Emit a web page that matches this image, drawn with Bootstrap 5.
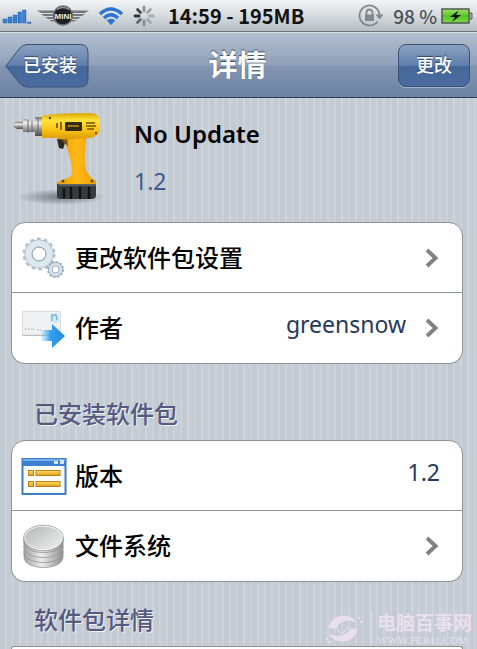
<!DOCTYPE html>
<html lang="zh-CN">
<head>
<meta charset="utf-8">
<meta name="viewport" content="width=device-width, initial-scale=1">
<title>详情</title>
<link href="https://cdn.jsdelivr.net/npm/bootstrap@5.3.0/dist/css/bootstrap.min.css" rel="stylesheet">
<style>
  body {
    font-family: "Noto Sans", "Noto Sans CJK SC", sans-serif;
    color: #000;
    background: #c5ccd4 repeating-linear-gradient(90deg, #c3cad2 0 5px, #cdd4da 5px 7px, #c5ccd4 7px 12px, #cbd2d8 12px 14px);
  }
  svg { display: block; flex: none; }
  .status-bar {
    height: 32px;
    padding: 0 4px 0 2px;
    font-size: 19px;
    background: linear-gradient(#f3f5f6, #d6dbdf 50%, #b5bdc4);
    border-bottom: 1px solid #6d7780;
  }
  .clock { font-family: "Noto Sans CJK SC", sans-serif; font-weight: 700; font-size: 20px; color: #111; line-height: 28px; margin-left: 12px; }
  .charge { font-family: "Noto Sans CJK SC", sans-serif; font-weight: 500; color: #4b4f53; line-height: 28px; }
  .title-bar {
    isolation: isolate;
    height: 66px;
    padding: 0 7px 0 5px;
    background: linear-gradient(#b2bfce, #8fa0b9 50%, #8496b2 51%, #6c81a3);
    border-top: 1px solid #dce2e9;
    border-bottom: 1px solid #303c4e;
  }
  .bar-side { flex: 1 1 0; }
  .title-bar h1 {
    font-size: 29px; line-height: 60px; font-weight: 700;
    color: #fff; text-shadow: 0 -1px 1px #3c4a60;
  }
  .bar-btn {
    height: 43px; padding: 0; border: 1px solid #3b5275; border-radius: 8px;
    font-size: 18px; line-height: 40px; font-weight: 500;
    color: #fff; text-shadow: 0 -1px 1px #30466b;
    background: linear-gradient(#8ba1c0, #5f7eac 50%, #446799 51%, #4a6ca0);
    box-shadow: 0 1px 0 #a3b3c9;
  }
  .bar-btn:hover { color: #fff; }
  .btn-change { width: 72px; }
  .btn-back { position: relative; width: 84px; border: 0; background: none; box-shadow: none; padding-left: 6px; }
  .btn-back svg { position: absolute; inset: 0; z-index: -1; }
  .package-head { padding: 8px 0 16px 8px; gap: 26px; }
  .package-head h2 { font-size: 24px; line-height: 32px; font-weight: 600; }
  .package-head p { font-size: 23px; line-height: 32px; color: #3d5b8f; margin-top: 15px; }
  .rows {
    margin: 0 14px 0 11px;
    --bs-list-group-border-color: #8e9296;
    --bs-list-group-border-radius: 14px;
    --bs-list-group-color: #000;
  }
  .rows .list-group-item { height: 71px; padding: 0 22px 0 9px; }
  .row-name { font-size: 24px; font-weight: 500; margin-left: 8px; line-height: 36px; }
  .row-value { font-size: 23px; line-height: 32px; color: #263a5c; margin-bottom: 8px; }
  .row-value + svg { margin-left: 18px; }
  .section-head { padding: 0 5px 0 34px; }
  .section-head h3 {
    font-size: 24px; line-height: 36px; font-weight: 500;
    color: #565a80; text-shadow: 1px 1px 0 #eef1f5;
  }
  .section-gap { padding-top: 32px; }
  .next-group { margin: 0 14px 0 11px; border: 1px solid #8e9296; border-bottom: 0; border-radius: 14px 14px 0 0; background: #fff; }
  .site-mark { color: #eadfec; gap: 8px; }
  .site-mark:hover { color: #eadfec; }
  .site-label { border-left: 1px solid #e2dae7; padding-left: 5px; }
  .site-name { font-size: 19px; line-height: 22px; font-weight: 700; }
  .site-url { font-family: "Liberation Serif", serif; font-size: 11px; line-height: 12px; }
</style>
</head>
<body>
<div class="d-flex flex-column min-vh-100 overflow-hidden">

  <div class="status-bar d-flex align-items-center">
    <svg width="30" height="18" viewBox="0 0 30 18" role="img" aria-label="信号">
      <g fill="#3a7fd0" stroke="#2767b3" stroke-width=".5"><path d="M1 12h4v4H1zM6 10h4v6H6zM11 8h4v8h-4zM16 5h3.500v11H16zM20.500 3h3.500v13h-3.500zM25.500 15h3.500v1.500h-3.500z"/></g>
    </svg>
    <svg class="ms-1" width="54" height="24" viewBox="0 0 54 24" role="img" aria-label="MINI">
      <g fill="#73797c"><path d="M1 6.500H19V9H5zM5 10h14v2H8zM9 13h10v2h-7zM13 16h7v1.500h-4zM53 6.500H35V9h14zM49 10H35v2h11zM45 13H35v2h7zM41 16h-7v1.500h4z"/></g>
      <circle cx="27" cy="11.500" r="9.500" fill="#1d2023" stroke="#6c7276" stroke-width="1.500"/>
      <path d="M21 5.500q6-4 12 0" stroke="#8d9498" stroke-width="1.500" fill="none"/>
      <text x="27" y="15" text-anchor="middle" font-family="Liberation Sans, sans-serif" font-size="8" font-weight="700" fill="#eee">MINI</text>
    </svg>
    <svg class="ms-2" width="26" height="20" viewBox="0 0 26 20" role="img" aria-label="Wi-Fi">
      <g fill="none" stroke="#2a75cf" stroke-width="3.400"><path d="M2 8Q13-2 24 8M6 12q7-6.500 14 0"/></g>
      <path d="M8.800 14.500q4.200-3.600 8.400 0L13 19z" fill="#2a75cf"/>
    </svg>
    <svg class="ms-2" width="24" height="24" viewBox="-12 -12 24 24" role="img" aria-label="加载中">
      <g stroke-width="2.800" stroke-linecap="round">
        <path d="M0-5v-4" stroke="#909599"/><path d="M3.500-3.500l3-3" stroke="#9da2a5"/><path d="M5 0h4" stroke="#aaafb2"/><path d="M3.500 3.500l3 3" stroke="#a0a5a8"/>
        <path d="M0 5v4" stroke="#858a8d"/><path d="M-3.500 3.500l-3 3" stroke="#64686b"/><path d="M-5 0h-4" stroke="#303336"/><path d="M-3.500-3.500l-3-3" stroke="#3f4346"/>
      </g>
    </svg>
    <span class="clock text-nowrap">14:59 - 195MB</span>
    <svg class="ms-auto" width="28" height="26" viewBox="0 0 28 26" role="img" aria-label="方向锁定">
      <g fill="none" stroke="#84898d" stroke-width="1.800"><path d="M20.500 18.500A10 10 0 1 1 22.500 12"/><path d="M9.500 12V9.500a3 3 0 0 1 6 0V12"/></g>
      <path d="M8 11.500h9v6.500H8zM18.500 11.500h8l-4 5z" fill="#84898d"/>
    </svg>
    <span class="charge ms-2 text-nowrap">98 %</span>
    <svg class="ms-1" width="32" height="18" viewBox="0 0 32 18" role="img" aria-label="正在充电">
      <defs><linearGradient id="cell" x2="0" y2="1"><stop stop-color="#a4e36c"/><stop offset=".5" stop-color="#55c322"/><stop offset="1" stop-color="#80d94b"/></linearGradient></defs>
      <rect x="1" y="2" width="27" height="14" fill="url(#cell)" stroke="#4f5a4f" stroke-width="1.500"/>
      <path d="M29 6h2v6h-2" fill="#9ba59b" stroke="#5b655b"/>
      <path d="M17.500 3.500L9 10h5l-3 5 9-7h-5z" fill="#111"/>
    </svg>
  </div>

  <header class="title-bar d-flex align-items-center">
    <div class="bar-side">
      <button type="button" class="btn bar-btn btn-back">
        <svg width="84" height="44" viewBox="0 0 84 44" aria-hidden="true">
          <defs><linearGradient id="back" x2="0" y2="1"><stop stop-color="#8ba1c0"/><stop offset=".5" stop-color="#5f7eac"/><stop offset=".51" stop-color="#446799"/><stop offset="1" stop-color="#4a6ca0"/></linearGradient></defs>
          <path d="M.8 22L14 5Q18 .5 22 .5h53q8 0 8 8V35q0 8-8 8H22q-4 0-8-4.500z" fill="url(#back)" stroke="#3b5275"/>
        </svg>已安装
      </button>
    </div>
    <h1 class="m-0">详情</h1>
    <div class="bar-side text-end">
      <button type="button" class="btn bar-btn btn-change">更改</button>
    </div>
  </header>

  <main class="d-flex flex-column flex-grow-1">
    <section class="package-head d-flex align-items-start">
      <svg width="100" height="100" viewBox="5 106 100 100" role="img" aria-label="电钻">
        <defs>
          <linearGradient id="body" x2="0" y2="1"><stop stop-color="#d9a800"/><stop offset=".25" stop-color="#ffe23a"/><stop offset=".6" stop-color="#f8c313"/><stop offset="1" stop-color="#d48e08"/></linearGradient>
          <linearGradient id="grip"><stop stop-color="#e79b0c"/><stop offset=".5" stop-color="#ffb914"/><stop offset="1" stop-color="#e99f08"/></linearGradient>
          <linearGradient id="steel" x2="0" y2="1"><stop stop-color="#777"/><stop offset=".3" stop-color="#f3f3f3"/><stop offset=".6" stop-color="#a0a0a0"/><stop offset="1" stop-color="#4c4c4c"/></linearGradient>
          <radialGradient id="shade"><stop stop-color="#555c63" stop-opacity=".75"/><stop offset="1" stop-color="#555c63" stop-opacity="0"/></radialGradient>
        </defs>
        <ellipse cx="58" cy="197" rx="44" ry="8" fill="url(#shade)"/>
        <path d="M11 123l3-1h6v7h-6l-3-2z" fill="url(#steel)" stroke="#888" stroke-width=".4"/>
        <path d="M20 119h5v13h-5zM25 121h7v11h-7zM32 117h7v19h-7z" fill="url(#steel)"/>
        <path d="M25 120v13M29 121v11M35 118v17" stroke="#555" stroke-width=".8"/>
        <path d="M58 135Q67 152 69 168 70 176 65 178L54 182V186H93V181Q86 177 83 170 80 156 84 135z" fill="url(#grip)"/>
        <path d="M39 116q10-3 49-3 9 1 9 9v7q-1 8-10 9l-21 1q-2 4-8 2l-4-3H39z" fill="url(#body)"/>
        <path d="M54 139l9 1-3 9-4-1z" fill="#2d2922"/><path d="M59 141l5-2 1 7z" fill="#7d5c0a"/>
        <rect x="62" y="122" width="17" height="9" rx="1" fill="#332b12"/>
        <path d="M65 126h11" stroke="#b58f20" stroke-width="2" stroke-dasharray="2 .6"/>
        <path d="M54 123v5M58 122v8M83 123h9M83 126h10M84 129h7" stroke="#745406" stroke-width="1.600"/>
        <circle cx="47" cy="118" r="1.200" fill="#5b4308"/><circle cx="93" cy="133" r="1.200" fill="#76520a"/><circle cx="60" cy="181" r="1.500" fill="#674908"/><circle cx="89" cy="181" r="1.500" fill="#674908"/>
        <path d="M54 184h39v12q-1 3-4 3H58q-4 0-4-3z" fill="#383b3e"/>
        <path d="M55 185h38" stroke="#6a6d70" stroke-width="1.500"/><path d="M61 188v10M68 187v12M77 187v12M86 187v12" stroke="#111" stroke-width="2.500"/>
      </svg>
      <div>
        <h2 class="m-0 mt-2 pt-1">No Update</h2>
        <p class="mb-0">1.2</p>
      </div>
    </section>

    <div class="list-group rows">
      <a href="#settings" class="list-group-item list-group-item-action d-flex align-items-center">
        <svg width="46" height="46" viewBox="0 0 46 46" aria-hidden="true">
          <g fill="none">
            <circle cx="18" cy="19" r="14.500" stroke="#b4c2cd" stroke-width="4" stroke-dasharray="3.500 3.090"/>
            <circle cx="18" cy="19" r="10.500" stroke="#a9b9c6" stroke-width="8"/>
            <circle cx="18" cy="19" r="10.500" stroke="#dde7ee" stroke-width="6.500"/>
            <circle cx="18" cy="19" r="7" stroke="#91a5b5" stroke-width="1"/>
            <circle cx="34.500" cy="34.500" r="7.300" stroke="#a2b3c0" stroke-width="2.600" stroke-dasharray="2.200 1.622"/>
            <circle cx="34.500" cy="34.500" r="5.200" stroke="#91a7b8" stroke-width="4.500"/>
            <circle cx="34.500" cy="34.500" r="5.200" stroke="#d5e1ea" stroke-width="3"/>
          </g>
        </svg>
        <span class="row-name">更改软件包设置</span>
        <svg class="ms-auto" width="16" height="20" viewBox="0 0 16 20" aria-hidden="true"><path d="M3 2l8.500 8L3 18" fill="none" stroke="#828282" stroke-width="4"/></svg>
      </a>
      <a href="#author" class="list-group-item list-group-item-action d-flex align-items-center">
        <svg width="46" height="46" viewBox="0 0 46 46" aria-hidden="true">
          <defs><linearGradient id="arrow"><stop stop-color="#4bb1f5" stop-opacity=".1"/><stop offset=".4" stop-color="#35a0ef"/><stop offset="1" stop-color="#2388e0"/></linearGradient></defs>
          <path d="M1.500 6.500h38V30h-38z" fill="#eff1f3" stroke="#d8dbde"/>
          <path d="M1.500 30.500h38" stroke="#b9bdc0"/>
          <path d="M29 8h9v10h-9z" fill="#d7e9f5"/><path d="M31 16V10h4l1 5" fill="none" stroke="#7db4d8" stroke-width="1.500"/>
          <path d="M4 24h10M16 25h4" stroke="#c3c7ca" stroke-width="1.500" stroke-dasharray="2 1"/>
          <path d="M20 25h11v-6l13 12-13 12v-7H20z" fill="url(#arrow)"/>
        </svg>
        <span class="row-name">作者</span>
        <span class="row-value ms-auto">greensnow</span>
        <svg width="16" height="20" viewBox="0 0 16 20" aria-hidden="true"><path d="M3 2l8.500 8L3 18" fill="none" stroke="#828282" stroke-width="4"/></svg>
      </a>
    </div>

    <div class="section-head section-gap"><h3 class="m-0">已安装软件包</h3></div>

    <div class="list-group rows mt-2">
      <div class="list-group-item d-flex align-items-center">
        <svg width="46" height="46" viewBox="0 0 46 46" aria-hidden="true">
          <defs><linearGradient id="gold" x2="0" y2="1"><stop stop-color="#f9e36a"/><stop offset="1" stop-color="#e89b10"/></linearGradient></defs>
          <rect x="1.500" y="6" width="43" height="35" fill="#fcfdff" stroke="#3d7cc4" stroke-width="2"/>
          <path d="M1 5h44v8H1z" fill="#3b7fd0"/><path d="M2 6h42v2H2z" fill="#79aee6"/>
          <path d="M33 8h4v3h-4zM39 7h4v4h-4z" fill="#d5e7fa"/>
          <g fill="url(#gold)" stroke="#c07e19"><rect x="7.500" y="17.500" width="5" height="5"/><rect x="15" y="17.500" width="24" height="5"/><rect x="7.500" y="28.500" width="5" height="5"/><rect x="15" y="28.500" width="24" height="5"/></g>
        </svg>
        <span class="row-name">版本</span>
        <span class="row-value ms-auto">1.2</span>
      </div>
      <a href="#files" class="list-group-item list-group-item-action d-flex align-items-center">
        <svg width="46" height="46" viewBox="0 0 46 46" aria-hidden="true">
          <defs>
            <linearGradient id="disk"><stop stop-color="#a2a2a2"/><stop offset=".45" stop-color="#ececec"/><stop offset="1" stop-color="#8f8f8f"/></linearGradient>
            <linearGradient id="lid" x2="1" y2="1"><stop stop-color="#b4b6b6"/><stop offset=".5" stop-color="#d2d4d4"/><stop offset="1" stop-color="#f0f0f0"/></linearGradient>
          </defs>
          <g fill="url(#disk)" stroke="#969696" stroke-width=".8">
            <path d="M3 28v6c0 14 39 14 39 0v-6z"/><path d="M3 23v6c0 14 39 14 39 0v-6z"/><path d="M3 17v7c0 14 39 14 39 0v-7z"/>
            <path d="M3 14v5c0 14 39 14 39 0v-5z"/>
          </g>
          <ellipse cx="22.500" cy="15" rx="19" ry="12" fill="url(#lid)" stroke="#f8f8f8"/>
          <ellipse cx="22.500" cy="15" rx="19.800" ry="12.800" fill="none" stroke="#969696" stroke-width=".8"/>
        </svg>
        <span class="row-name">文件系统</span>
        <svg class="ms-auto" width="16" height="20" viewBox="0 0 16 20" aria-hidden="true"><path d="M3 2l8.500 8L3 18" fill="none" stroke="#828282" stroke-width="4"/></svg>
      </a>
    </div>

    <div class="section-head d-flex justify-content-between align-items-end pt-3">
      <h3 class="m-0 pt-1 pb-2">软件包详情</h3>
      <a href="#site" class="site-mark d-flex align-items-center text-decoration-none">
        <svg width="38" height="34" viewBox="0 0 38 34" aria-hidden="true">
          <g fill="none" stroke="#eadfec"><path d="M4 16Q7 3 20 4q8 1 10 6-7-4-14 0-5 3-4 6z" fill="#eadfec"/><path d="M32 17q-3 13-16 12-8-1-11-6 9 3 16-1 5-2 4-5z" fill="#eadfec"/><path d="M12 18l5 4 8-9"/></g>
          <path d="M33 5h2v2h-2zM35 9h2v2h-2zM1 26h2v2H1zM4 29h2v2H4z" fill="#eadfec"/>
        </svg>
        <span class="site-label d-flex flex-column">
          <span class="site-name">电脑百事网</span>
          <span class="site-url">WWW.PC841.COM</span>
        </span>
      </a>
    </div>

    <div class="next-group flex-grow-1"></div>
  </main>
</div>
<script src="https://cdn.jsdelivr.net/npm/bootstrap@5.3.0/dist/js/bootstrap.bundle.min.js"></script>
</body>
</html>
